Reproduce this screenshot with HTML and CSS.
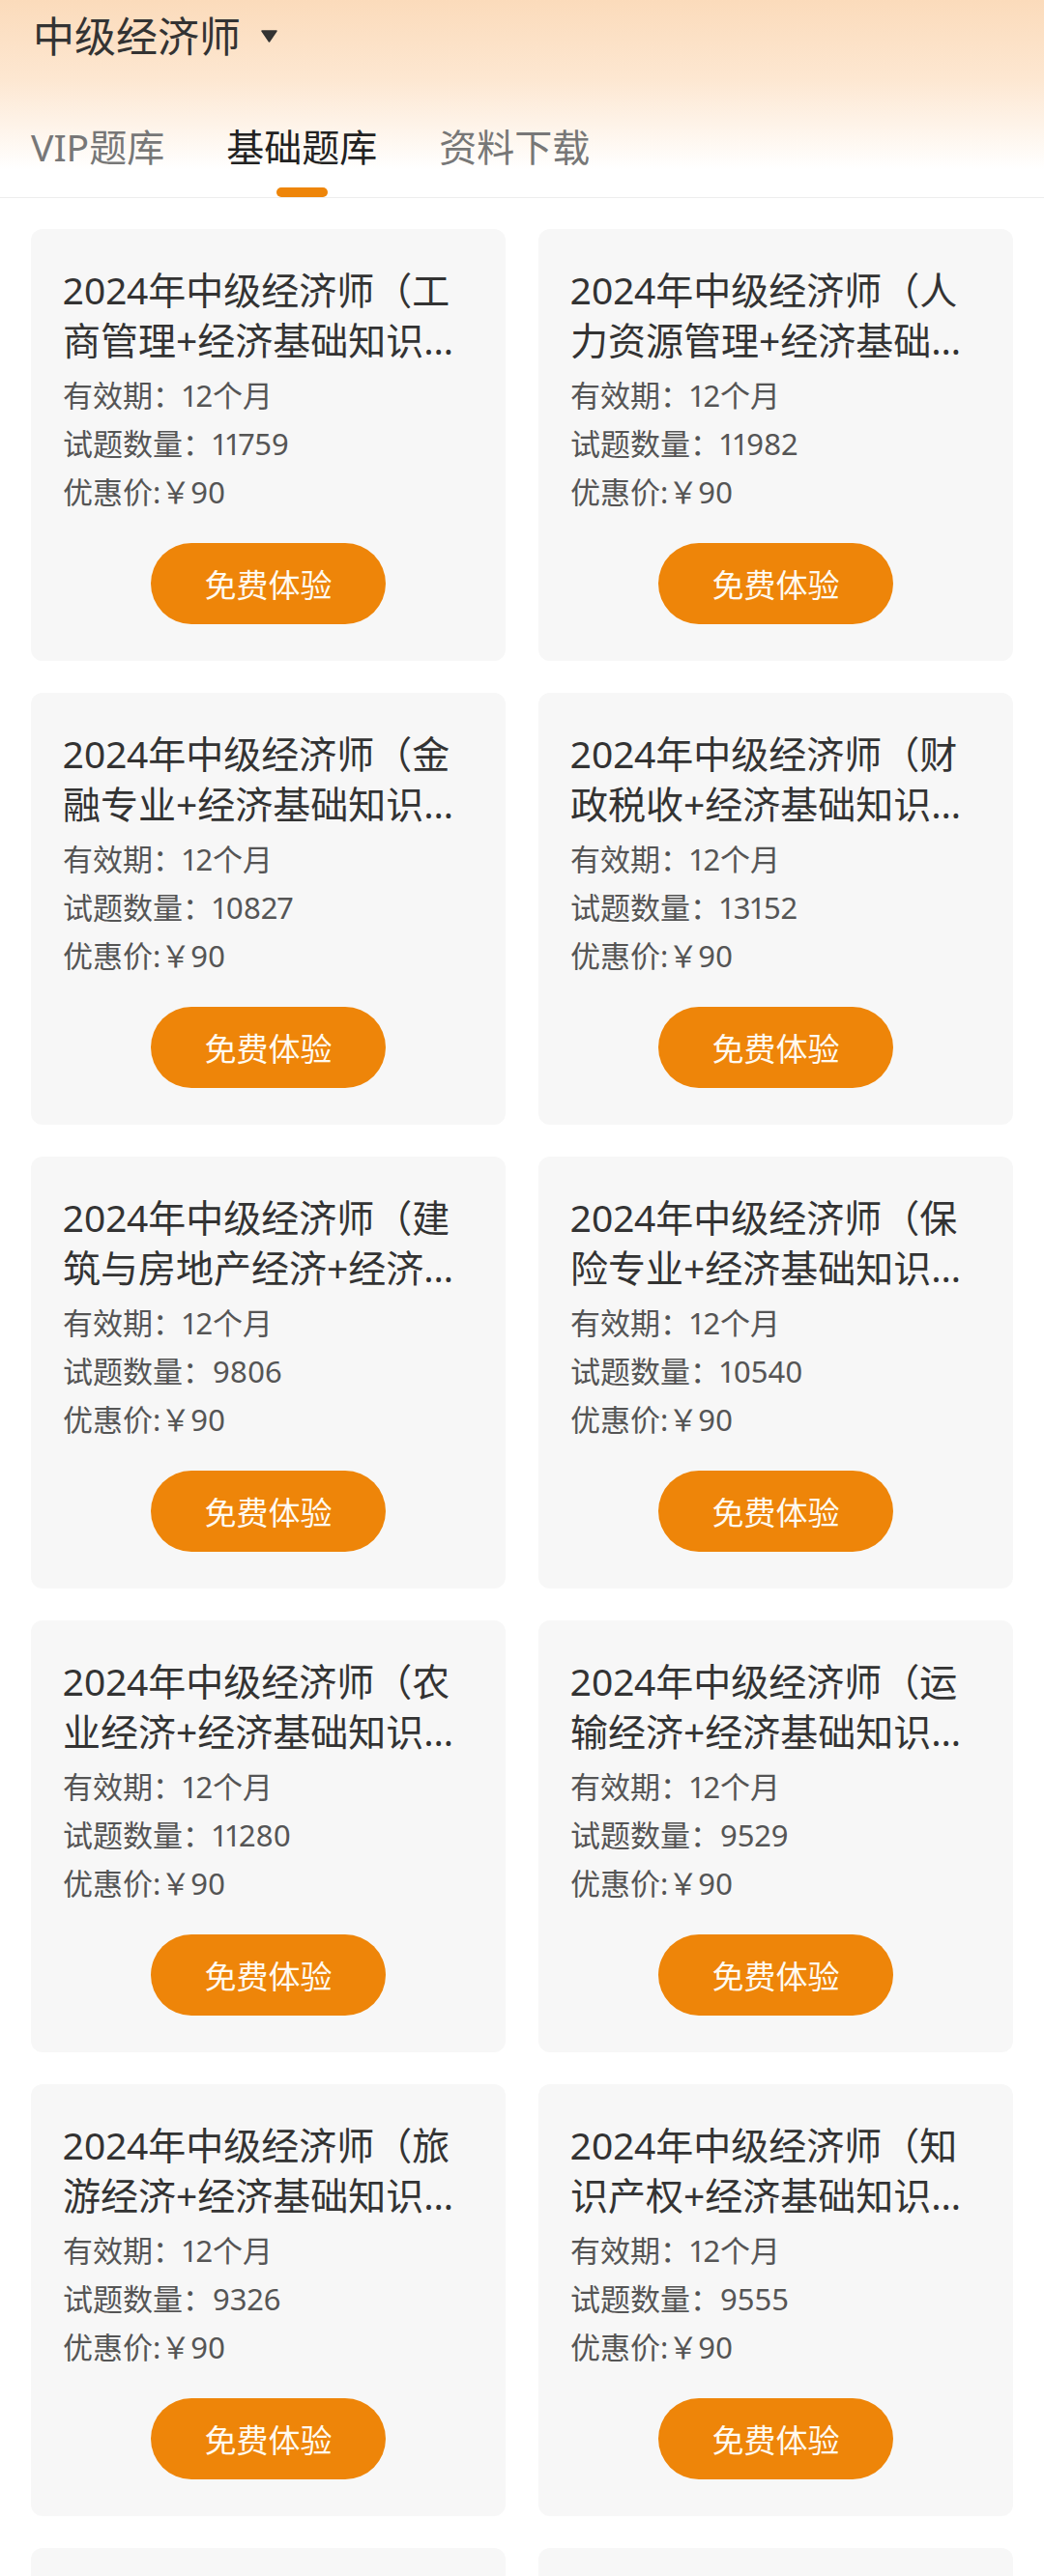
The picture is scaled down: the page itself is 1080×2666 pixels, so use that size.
FILE: index.html
```html
<!DOCTYPE html>
<html>
<head>
	<meta charset="utf-8">
	<title>中级经济师</title>
	<link rel="stylesheet" href="styles.css">
</head>
<body>
<div class="header">
	<div class="topbar">
		<h1>中级经济师</h1>
		<svg class="caret" viewBox="0 0 17 13"><path d="M1 1 H16 L8.5 12 Z" fill="#333" stroke="#333" stroke-width="1.5" stroke-linejoin="round"/></svg>
	</div>
	<div class="tabs">
		<span class="tab">VIP题库</span>
		<span class="tab active">基础题库</span>
		<span class="tab">资料下载</span>
	</div>
</div>

<div class="list">
	<div class="card">
		<div class="title">2024年中级经济师（工商管理+经济基础知识…</div>
		<div class="info">
			<p>有效期：12个月</p>
			<p>试题数量：11759</p>
			<p>优惠价:￥90</p>
		</div>
		<a href="javascript:;" class="btn">免费体验</a>
	</div>
	<div class="card">
		<div class="title">2024年中级经济师（人力资源管理+经济基础…</div>
		<div class="info">
			<p>有效期：12个月</p>
			<p>试题数量：11982</p>
			<p>优惠价:￥90</p>
		</div>
		<a href="javascript:;" class="btn">免费体验</a>
	</div>
	<div class="card">
		<div class="title">2024年中级经济师（金融专业+经济基础知识…</div>
		<div class="info">
			<p>有效期：12个月</p>
			<p>试题数量：10827</p>
			<p>优惠价:￥90</p>
		</div>
		<a href="javascript:;" class="btn">免费体验</a>
	</div>
	<div class="card">
		<div class="title">2024年中级经济师（财政税收+经济基础知识…</div>
		<div class="info">
			<p>有效期：12个月</p>
			<p>试题数量：13152</p>
			<p>优惠价:￥90</p>
		</div>
		<a href="javascript:;" class="btn">免费体验</a>
	</div>
	<div class="card">
		<div class="title">2024年中级经济师（建筑与房地产经济+经济…</div>
		<div class="info">
			<p>有效期：12个月</p>
			<p>试题数量：9806</p>
			<p>优惠价:￥90</p>
		</div>
		<a href="javascript:;" class="btn">免费体验</a>
	</div>
	<div class="card">
		<div class="title">2024年中级经济师（保险专业+经济基础知识…</div>
		<div class="info">
			<p>有效期：12个月</p>
			<p>试题数量：10540</p>
			<p>优惠价:￥90</p>
		</div>
		<a href="javascript:;" class="btn">免费体验</a>
	</div>
	<div class="card">
		<div class="title">2024年中级经济师（农业经济+经济基础知识…</div>
		<div class="info">
			<p>有效期：12个月</p>
			<p>试题数量：11280</p>
			<p>优惠价:￥90</p>
		</div>
		<a href="javascript:;" class="btn">免费体验</a>
	</div>
	<div class="card">
		<div class="title">2024年中级经济师（运输经济+经济基础知识…</div>
		<div class="info">
			<p>有效期：12个月</p>
			<p>试题数量：9529</p>
			<p>优惠价:￥90</p>
		</div>
		<a href="javascript:;" class="btn">免费体验</a>
	</div>
	<div class="card">
		<div class="title">2024年中级经济师（旅游经济+经济基础知识…</div>
		<div class="info">
			<p>有效期：12个月</p>
			<p>试题数量：9326</p>
			<p>优惠价:￥90</p>
		</div>
		<a href="javascript:;" class="btn">免费体验</a>
	</div>
	<div class="card">
		<div class="title">2024年中级经济师（知识产权+经济基础知识…</div>
		<div class="info">
			<p>有效期：12个月</p>
			<p>试题数量：9555</p>
			<p>优惠价:￥90</p>
		</div>
		<a href="javascript:;" class="btn">免费体验</a>
	</div>
	<div class="card card-more"></div>
	<div class="card card-more"></div>
</div>
</body>
</html>
```

FILE: styles.css
```css
*{margin: 0; padding: 0; box-sizing: border-box; text-decoration: none;}
body{
	font-family: "Noto Sans", "Noto Sans CJK SC", sans-serif;
	font-variant-numeric: proportional-nums;
	background: #fff;
	color: #333;
}

/* 顶部 */
.header{
	height: 205px;
	background: linear-gradient(180deg, #fbdbbb 0%, #fde7d1 40%, #fff 86%);
	border-bottom: 1px solid #ededed;
}
.topbar{
	height: 75px;
	display: flex; align-items: center;
	padding-left: 34px;
}
.topbar h1{
	font-size: 43px; font-weight: normal;
	line-height: 1;
	color: #333;
}
.caret{ width: 17px; height: 13px; margin-left: 21px; }
.tabs{
	display: flex; align-items: flex-start;
	gap: 64px;
	padding-left: 32px;
	margin-top: 52px;
}
.tab{
	display: flex; flex-direction: column; align-items: center;
	font-size: 39px; line-height: 50px;
	color: #777;
}
.tab.active{ color: #222; }
.tab.active::after{
	content: "";
	width: 53px; height: 10px;
	margin-top: 17px;
	border-radius: 5px;
	background: #ee8509;
}

/* 列表 */
.list{
	display: grid;
	grid-template-columns: 1fr 1fr;
	gap: 33px 34px;
	padding: 32px 32px 0;
}
.card{
	display: flex; flex-direction: column;
	background: #f7f7f7;
	border-radius: 12px;
	padding: 37px 33px 38px;
}
.card-more{ height: 447px; }
.title{
	font-size: 39px; line-height: 52px;
	height: 104px;
	margin-right: 5px;
	color: #333;
	overflow: hidden;
}
.info{
	margin-top: 6px;
	font-size: 31px; line-height: 50px;
	color: #555;
}
.btn{
	align-self: center;
	margin-top: 28px;
	width: 243px; height: 84px;
	border-radius: 42px;
	background: #ee8509;
	color: #fffaf0;
	font-size: 33px;
	display: flex; align-items: center; justify-content: center;
}
```
